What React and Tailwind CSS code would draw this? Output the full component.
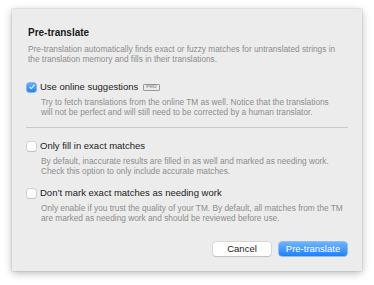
import React, { useState } from "react";

const Checkbox = ({ checked, onChange }) => (
  <button
    type="button"
    onClick={onChange}
    className={
      checked
        ? "flex h-[9px] w-[9px] shrink-0 items-center justify-center rounded-[2px] bg-gradient-to-b from-[#5eabfb] to-[#1d83fb] shadow-[0_0_0_0.5px_#2a7fe0]"
        : "h-[9px] w-[9px] shrink-0 rounded-[2px] bg-white shadow-[0_0_0_0.5px_#b9b9b9,0_0.5px_1px_rgba(0,0,0,0.15)]"
    }
  >
    {checked && (
      <svg viewBox="0 0 10 10" className="h-[8px] w-[8px]">
        <path
          d="M2.3 5.2 L4.2 7.2 L7.8 2.6"
          fill="none"
          stroke="#fff"
          strokeWidth="1.4"
          strokeLinecap="round"
          strokeLinejoin="round"
        />
      </svg>
    )}
  </button>
);

// hint is an array of lines, wrapped the same way as the dialog
const Option = ({ label, badge, hint, checked, onToggle, className }) => (
  <div className={className}>
    <div className="flex h-[12px] items-center">
      <div className="ml-[15px] w-[13px]">
        <Checkbox checked={checked} onChange={onToggle} />
      </div>
      <span className="text-[9.5px] leading-[12px] text-[#1c1c1c]">{label}</span>
      {badge && (
        <span className="ml-[5px] flex h-[7px] items-center rounded-[1px] border border-[#9a9a9a] px-[2px] text-[4.5px] font-bold leading-none tracking-[0.3px] text-[#8a8a8a]">
          {badge}
        </span>
      )}
    </div>
    <p className="ml-[29px] mt-[4px] whitespace-nowrap text-[8.3px] leading-[10px] text-[#8d8d8d]">
      {hint[0]}
      <br />
      {hint[1]}
    </p>
  </div>
);

export default function App() {
  const [online, setOnline] = useState(true);
  const [exact, setExact] = useState(false);
  const [noMark, setNoMark] = useState(false);

  return (
    <div className="h-[285px] w-[374px] bg-white pl-[12px] pt-[9px] font-['Liberation_Sans',Arial,sans-serif]">
      <div className="flex h-[262px] w-[350px] flex-col bg-[#ececec] shadow-[0_2px_8px_rgba(0,0,0,0.28),0_0_0_0.5px_rgba(0,0,0,0.12)]">
        <h3 className="ml-[16px] mt-[18px] text-[10px] font-bold leading-[12px] text-[#1a1a1a]">
          Pre-translate
        </h3>
        <p className="ml-[16px] mt-[5px] whitespace-nowrap text-[8.3px] leading-[10px] text-[#8d8d8d]">
          Pre-translation automatically finds exact or fuzzy matches for untranslated strings in
          <br />
          the translation memory and fills in their translations.
        </p>

        <Option
          className="mt-[17px]"
          label="Use online suggestions"
          badge="PRO"
          checked={online}
          onToggle={() => setOnline(!online)}
          hint={[
            "Try to fetch translations from the online TM as well. Notice that the translations",
            "will not be perfect and will still need to be corrected by a human translator.",
          ]}
        />

        <div className="mx-[14px] mt-[10px] h-px bg-[#c9c9c9]" />

        <Option
          className="mt-[12px]"
          label="Only fill in exact matches"
          checked={exact}
          onToggle={() => setExact(!exact)}
          hint={[
            "By default, inaccurate results are filled in as well and marked as needing work.",
            "Check this option to only include accurate matches.",
          ]}
        />

        <Option
          className="mt-[11px]"
          label="Don’t mark exact matches as needing work"
          checked={noMark}
          onToggle={() => setNoMark(!noMark)}
          hint={[
            "Only enable if you trust the quality of your TM. By default, all matches from the TM",
            "are marked as needing work and should be reviewed before use.",
          ]}
        />

        <div className="mt-auto mb-[15px] mr-[15px] flex justify-end gap-[8px]">
          <button
            type="button"
            className="h-[14px] w-[58px] rounded-[3px] bg-white text-[9.5px] leading-[14px] text-[#1c1c1c] shadow-[0_0_0_0.5px_#c4c4c4,0_0.5px_1px_rgba(0,0,0,0.18)]"
          >
            Cancel
          </button>
          <button
            type="button"
            className="h-[14px] w-[68px] rounded-[3px] bg-gradient-to-b from-[#6cb4fb] to-[#1782fb] text-[9.5px] leading-[14px] text-white shadow-[0_0_0_0.5px_#3f8ee8]"
          >
            Pre-translate
          </button>
        </div>
      </div>
    </div>
  );
}
